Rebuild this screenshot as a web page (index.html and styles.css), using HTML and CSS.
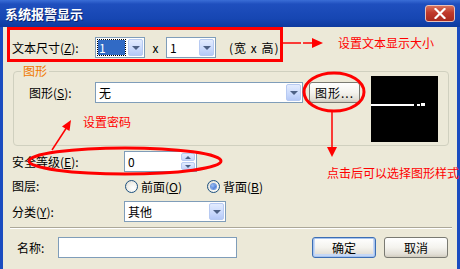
FILE: index.html
```html
<!DOCTYPE html>
<html lang="zh-CN">
<head>
    <meta charset="UTF-8">
    <meta name="viewport" content="width=device-width, initial-scale=1.0">
    <link rel="stylesheet" href="styles.css">
    <title>系统报警显示</title>
</head>
<body>
    <div class="window">
        <div class="titlebar">
            <span class="title">系统报警显示</span>
            <span class="close">
                <svg width="12" height="11" viewBox="0 0 12 11">
                    <path d="M1.5 1 L10.5 10 M10.5 1 L1.5 10" stroke="#fff" stroke-width="2.2" stroke-linecap="square"/>
                </svg>
            </span>
        </div>
        <div class="content">
            <div class="row row-size">
                <label class="lbl lbl-size">文本尺寸(<u>Z</u>):</label>
                <div class="combo combo-w"><span class="value selected">1</span><span class="drop"></span></div>
                <span class="times">x</span>
                <div class="combo combo-h"><span class="value">1</span><span class="drop"></span></div>
                <span class="unit">(宽 x 高)</span>
            </div>

            <div class="group">
                <div class="group-title">图形</div>
                <div class="group-body">
                    <div class="shape-row">
                        <label class="lbl lbl-shape">图形(<u>S</u>):</label>
                        <div class="combo combo-shape"><span class="value">无</span><span class="drop"></span></div>
                        <button class="btn btn-shape">图形...</button>
                    </div>
                    <div class="preview">
                        <svg width="67" height="66" viewBox="0 0 67 66">
                            <rect x="0" y="28" width="43" height="2" fill="#fff"/>
                            <rect x="46" y="28" width="3" height="2" fill="#fff"/>
                            <rect x="50" y="27" width="4" height="3" fill="#fff"/>
                        </svg>
                    </div>
                </div>
            </div>

            <div class="row row-level">
                <label class="lbl lbl-wide">安全等级(<u>E</u>):</label>
                <div class="spinner">
                    <span class="value">0</span>
                    <span class="spin-btns">
                        <span class="spin up"></span>
                        <span class="spin down"></span>
                    </span>
                </div>
            </div>

            <div class="row row-layer">
                <label class="lbl lbl-wide">图层:</label>
                <span class="radio-item radio-front"><span class="radio"></span>前面(<u>O</u>)</span>
                <span class="radio-item"><span class="radio checked"></span>背面(<u>B</u>)</span>
            </div>

            <div class="row row-type">
                <label class="lbl lbl-wide">分类(<u>Y</u>):</label>
                <div class="combo combo-type"><span class="value">其他</span><span class="drop"></span></div>
            </div>

            <div class="separator"></div>

            <div class="row row-bottom">
                <label class="lbl lbl-name">名称:</label>
                <div class="textbox"></div>
                <button class="btn btn-ok">确定</button>
                <button class="btn btn-cancel">取消</button>
            </div>
        </div>

        <!-- red notes drawn on top of the dialog -->
        <svg class="marks" width="460" height="269" viewBox="0 0 460 269">
            <g fill="none" stroke="#f00" stroke-width="3">
                <rect x="8.5" y="28.5" width="273" height="32"/>
                <ellipse cx="334" cy="92" rx="30" ry="19"/>
                <ellipse cx="125" cy="161" rx="96" ry="13"/>
            </g>
            <g stroke="#f00" stroke-width="1.5">
                <line x1="283" y1="43" x2="301" y2="43"/>
                <line x1="303" y1="43" x2="314" y2="43"/>
                <line x1="332" y1="111" x2="332" y2="149"/>
                <line x1="52" y1="150" x2="67" y2="127"/>
            </g>
            <g fill="#f00">
                <polygon points="312,38 323,43 312,48"/>
                <polygon points="327,147 337,147 332,157"/>
                <polygon points="71,120 69.5,131 62,126.5"/>
            </g>
        </svg>
        <span class="note note-size">设置文本显示大小</span>
        <span class="note note-pass">设置密码</span>
        <span class="note note-shape">点击后可以选择图形样式</span>
    </div>
</body>
</html>
```

FILE: styles.css
```css
body {
    margin: 0;
    font-family: 'Noto Sans CJK SC', 'Liberation Sans', sans-serif;
    font-size: 12px;
    color: #000;
    background-color: #ECE9D8;
}

.window {
    position: relative;
    width: 460px;
    height: 269px;
    overflow: hidden;
    background-color: #ECE9D8;
}

.titlebar {
    height: 27px;
    display: flex;
    align-items: center;
    justify-content: space-between;
    padding: 0 5px 0 5px;
    box-sizing: border-box;
    background: linear-gradient(#3A6DD6, #1F4FBE 15%, #1646B2 70%, #0D3A9E);
}

.title {
    color: #fff;
    font-size: 13px;
    font-weight: bold;
    text-shadow: 1px 1px 0 #0A2470;
    line-height: 27px;
}

.close {
    width: 30px;
    height: 17px;
    margin-top: -1px;
    display: flex;
    align-items: center;
    justify-content: center;
    box-sizing: border-box;
    border: 1px solid #E8C0B8;
    border-radius: 3px;
    background: linear-gradient(#D8705A, #C0392B 45%, #A82A1E);
}

.content {
    height: 242px;
    box-sizing: border-box;
    border-left: 3px solid #1B4CC0;
    border-right: 3px solid #1B4CC0;
    padding: 10px 5px 0 7px;
}

.row {
    display: flex;
    align-items: center;
    padding-left: 2px;
}

.lbl {
    flex: none;
    line-height: 16px;
}

.lbl-size {
    width: 83px;
}

.lbl-wide {
    width: 112px;
}

/* combo boxes */
.combo {
    display: flex;
    height: 21px;
    box-sizing: border-box;
    border: 1px solid #7F9DB9;
    background-color: #fff;
    flex: none;
}

.combo .value {
    flex: 1;
    padding-left: 3px;
    line-height: 19px;
}

.combo .value.selected {
    margin: 2px 2px 2px 2px;
    padding-left: 1px;
    line-height: 15px;
    background-color: #316AC5;
    color: #fff;
    outline: 1px dotted #000;
}

.drop {
    width: 15px;
    height: 17px;
    margin: 1px;
    box-sizing: border-box;
    border: 1px solid #B7CAF2;
    border-radius: 2px;
    background: linear-gradient(#E3ECFE, #C9D9FC 60%, #B5C9F7);
    display: flex;
    align-items: center;
    justify-content: center;
}

.drop::after {
    content: '';
    border-left: 4px solid transparent;
    border-right: 4px solid transparent;
    border-top: 4px solid #4D6185;
    margin-top: 1px;
}

.combo-w,
.combo-h {
    width: 50px;
}

.times {
    width: 21px;
    text-align: center;
}

.unit {
    margin-left: 13px;
    letter-spacing: 1px;
}

/* group box */
.group {
    margin: 13px 3px 0 3px;
    border: 1px solid #D0D0BF;
    border-radius: 4px;
}

.group-title {
    width: fit-content;
    height: 14px;
    line-height: 14px;
    margin: -8px 0 0 7px;
    padding: 0 2px;
    background-color: #ECE9D8;
    color: #F07800;
}

.group-body {
    display: flex;
    align-items: flex-start;
    margin-top: -2px;
    padding: 0 10px 3px 15px;
}

.shape-row {
    display: flex;
    align-items: center;
    margin-top: 6px;
}

.lbl-shape {
    width: 66px;
}

.combo-shape {
    width: 208px;
}

.preview {
    width: 67px;
    height: 66px;
    margin-left: 11px;
    background-color: #000;
}

.preview svg {
    display: block;
}

/* buttons */
.btn {
    font: inherit;
    color: #000;
    height: 21px;
    padding: 0;
    box-sizing: border-box;
    border: 1px solid #7A7A72;
    border-radius: 3px;
    background: linear-gradient(#FFFFFF, #F4F3EE 50%, #E2DFD6 85%, #D2CDC0);
    flex: none;
}

.btn-shape {
    width: 51px;
    margin-left: 6px;
    letter-spacing: 1px;
}

.btn-ok {
    width: 64px;
    margin-left: auto;
    border-color: #3C6EB4;
    box-shadow: inset 0 0 0 1px #A8C4EE, inset 0 -1px 0 2px #C6D8F5;
}

.btn-cancel {
    width: 64px;
    margin-left: 8px;
    margin-right: 4px;
}

/* spinner */
.row-level {
    margin-top: 5px;
}

.spinner {
    display: flex;
    width: 73px;
    height: 21px;
    box-sizing: border-box;
    border: 1px solid #7F9DB9;
    background-color: #fff;
}

.spinner .value {
    flex: 1;
    padding-left: 3px;
    line-height: 19px;
}

.spin-btns {
    display: flex;
    flex-direction: column;
    width: 14px;
    margin: 1px;
    gap: 1px;
}

.spin {
    flex: 1;
    display: flex;
    align-items: center;
    justify-content: center;
    border: 1px solid #B7CAF2;
    border-radius: 2px;
    background: linear-gradient(#E3ECFE, #C3D4FB);
}

.spin.up::after {
    content: '';
    border-left: 3px solid transparent;
    border-right: 3px solid transparent;
    border-bottom: 3px solid #4D6185;
}

.spin.down::after {
    content: '';
    border-left: 3px solid transparent;
    border-right: 3px solid transparent;
    border-top: 3px solid #4D6185;
}

/* radios */
.row-layer {
    margin-top: 6px;
    height: 16px;
}

.radio-item {
    display: flex;
    align-items: center;
}

.radio-front {
    width: 82px;
    margin-left: 1px;
}

.radio {
    width: 13px;
    height: 13px;
    box-sizing: border-box;
    border: 1px solid #1C5180;
    border-radius: 50%;
    margin-right: 3px;
    background: radial-gradient(circle at 65% 65%, #FFFFFF, #F2F1EB 50%, #D6D3C8);
    display: flex;
    align-items: center;
    justify-content: center;
}

.radio.checked::after {
    content: '';
    width: 5px;
    height: 5px;
    border-radius: 50%;
    background: radial-gradient(circle at 35% 35%, #9CC0F5, #2459C8);
    box-shadow: 0 0 0 1px #6E98DE;
}

/* category */
.row-type {
    margin-top: 7px;
}

.combo-type {
    width: 102px;
}

.separator {
    margin-top: 5px;
    border-top: 1px solid #ACA899;
    border-bottom: 1px solid #fff;
}

/* bottom row */
.row-bottom {
    margin-top: 8px;
    padding-left: 7px;
}

.lbl-name {
    width: 41px;
}

.textbox {
    width: 179px;
    height: 21px;
    box-sizing: border-box;
    border: 1px solid #7F9DB9;
    background-color: #fff;
}

/* annotations */
.marks {
    position: absolute;
    left: 0;
    top: 0;
    pointer-events: none;
}

.note {
    position: absolute;
    color: #f00;
    font-size: 12px;
    line-height: 14px;
    white-space: nowrap;
}

.note-size {
    left: 338px;
    top: 36px;
}

.note-pass {
    left: 83px;
    top: 115px;
}

.note-shape {
    left: 327px;
    top: 166px;
}
```
